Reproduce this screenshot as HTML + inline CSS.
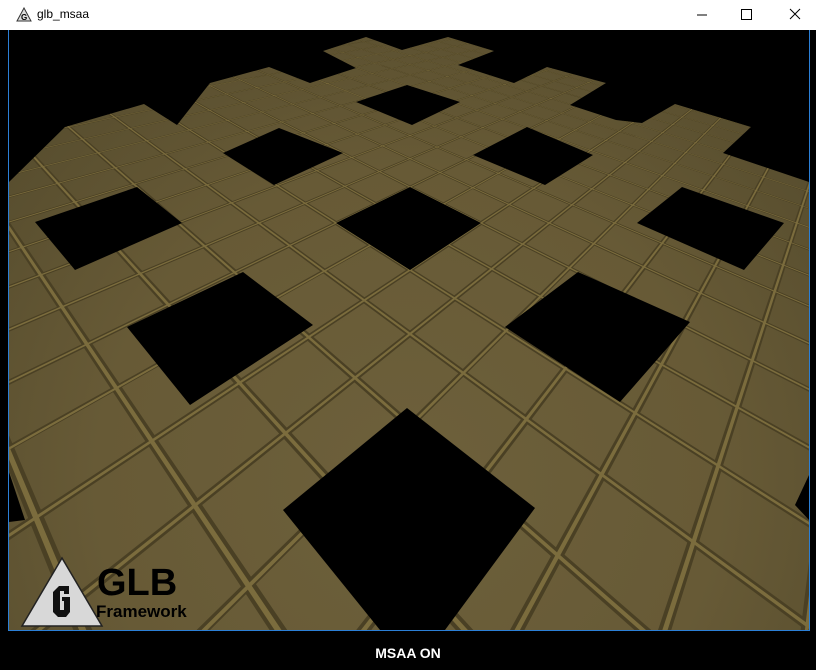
<!DOCTYPE html>
<html><head><meta charset="utf-8"><style>
html,body{margin:0;padding:0;background:#000;width:816px;height:670px;overflow:hidden;font-family:"Liberation Sans",sans-serif}
#tb{position:absolute;left:0;top:0;width:816px;height:30px;background:#fff}
#tb .t{position:absolute;left:37px;top:7px;font-size:12px;color:#000}
#cl{position:absolute;left:8px;top:30px;width:802px;height:601px;background:#000;border-left:1px solid #2b7fd6;border-right:1px solid #2b7fd6;border-bottom:1px solid #2b7fd6;box-sizing:border-box}
#msaa{position:absolute;left:0;width:816px;top:645px;height:20px;text-align:center;color:#fff;font-weight:bold;font-size:14px}
</style></head><body>
<div id="tb">
<svg width="16" height="16" style="position:absolute;left:16px;top:7px" viewBox="0 0 16 16"><polygon points="8,1 15,14 1,14" fill="#ddd" stroke="#333"/><text x="5" y="13" font-size="8" font-weight="bold" font-family="Liberation Sans">G</text></svg>
<span class="t">glb_msaa</span>
<svg width="130" height="30" style="position:absolute;right:0;top:0" viewBox="0 0 130 30">
<line x1="11" y1="15" x2="21" y2="15" stroke="#000"/>
<rect x="55.5" y="9.5" width="10" height="10" fill="none" stroke="#000"/>
<path d="M104 9 L114 19 M114 9 L104 19" stroke="#000"/>
</svg>
</div>
<div id="cl"></div>
<svg id="sc" width="816" height="670" style="position:absolute;left:0;top:0" viewBox="0 0 816 670">
<defs>
<radialGradient id="vg" cx="409" cy="480" r="520" gradientUnits="userSpaceOnUse">
<stop offset="0" stop-color="#6d603b"/><stop offset="0.6" stop-color="#675a36"/><stop offset="1" stop-color="#574d2e"/></radialGradient>
<clipPath id="cp"><rect x="9" y="30" width="800" height="600"/></clipPath>
</defs>
<g clip-path="url(#cp)">
<rect x="9" y="30" width="800" height="600" fill="url(#vg)"/>
<g id="grid"></g>
<path fill="#000" d="M0,0 H816 V182 L809,182 L723,153 L751,127 L675,104 L642,123 L616,120 L570,105 L606,83 L547,67 L514,83 L458,65 L494,51 L448,37 L402,50 L366,37 L323,51 L356,68 L310,83 L269,67 L210,83 L177,125 L144,104 L65,127 L9,182 L0,182 Z"/>
<g fill="#000">
<polygon points="356,102 407,85 460,102 412,125"/>
<polygon points="223,153 279,128 343,153 274,185"/>
<polygon points="473,155 527,127 593,155 545,185"/>
<polygon points="35,222 137,187 182,223 75,270"/>
<polygon points="336,223 410,187 481,223 410,270"/>
<polygon points="637,223 682,187 784,223 744,270"/>
<polygon points="127,327 243,272 313,325 190,405"/>
<polygon points="505,327 578,272 690,322 620,402"/>
<polygon points="283,510 407,408 535,508 445,630 380,630"/>
<polygon points="9,472 25,520 9,522"/>
<polygon points="809,475 795,505 809,520"/>
</g>
</g>
<g transform="translate(22,558)">
<polygon points="40,0 80,68 0,68" fill="#d8d8d8" stroke="#222" stroke-width="1.5"/>
<path d="M31,34 L37,28 H47 V36 H42 V33 H38 V52 H42 V43 H40 V39 H48 V54 L44,59 H36 L31,54 Z" fill="#111"/>
<text x="75" y="37" font-size="38" font-weight="bold" fill="#000" font-family="Liberation Sans">GLB</text>
<text x="74" y="59" font-size="17" font-weight="bold" fill="#000" font-family="Liberation Sans">Framework</text>
</g>
</svg>
<div id="msaa">MSAA ON</div>
<script>
(function(){
var x0=410,y0=187,x1=481,y1=223,x2=410,y2=270,x3=336,y3=223;
var dx1=x1-x2,dx2=x3-x2,dx3=x0-x1+x2-x3,dy1=y1-y2,dy2=y3-y2,dy3=y0-y1+y2-y3;
var den=dx1*dy2-dx2*dy1;
var g=(dx3*dy2-dx2*dy3)/den,h=(dx1*dy3-dx3*dy1)/den;
var a=x1-x0+g*x1,b=x3-x0+h*x3,c=x0,d=y1-y0+g*y1,e=y3-y0+h*y3,f=y0;
function P(u,v){var w=g*u+h*v+1;if(w<0.03)w=0.03;return [(a*u+b*v+c)/w,(d*u+e*v+f)/w];}
function vis(u,v){return g*u+h*v+1>0.03;}
var out='';
function quad(pts,fill){out+='<polygon fill="'+fill+'" points="'+pts.map(function(p){return p[0].toFixed(1)+','+p[1].toFixed(1)}).join(' ')+'"/>';}
function seg(u,swap,w,fill){
  var lo=null,hi=null;
  for(var t=-14;t<=14;t+=0.05){var uu=swap?t:u,vv=swap?u:t;if(vis(uu,vv)){if(lo===null)lo=t;hi=t;}}
  if(lo===null)return;
  function M(s,t){return swap?P(t,s):P(s,t);}
  quad([M(u-w,lo),M(u+w,lo),M(u+w,hi),M(u-w,hi)],fill);
}
for(var k=-14;k<=14;k+=0.5){seg(k,false,0.024,'#4a4024');seg(k,true,0.024,'#4a4024');}
for(var k=-14;k<=14;k+=0.5){seg(k,false,0.009,'#7b6c3d');seg(k,true,0.009,'#7b6c3d');}
document.getElementById('grid').innerHTML=out;
})();
</script>
</body></html>
